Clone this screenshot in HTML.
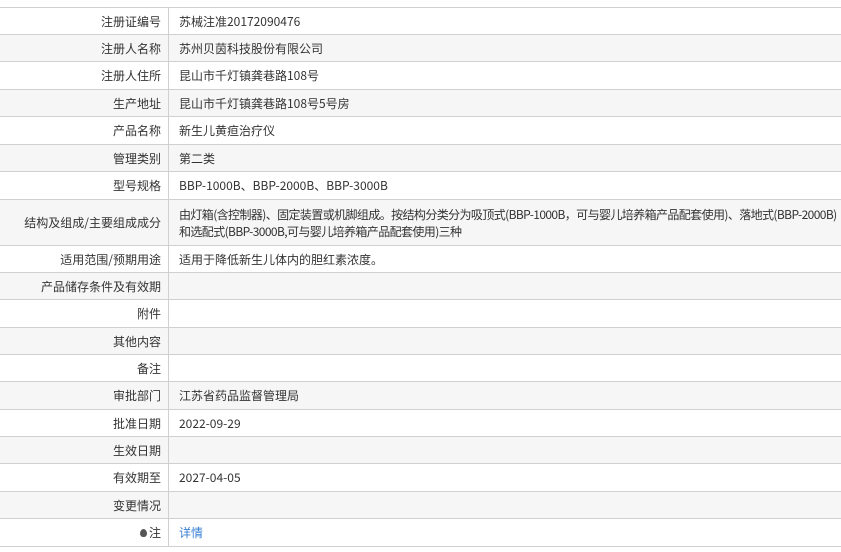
<!DOCTYPE html>
<html><head><meta charset="utf-8"><style>
body{margin:0;width:841px;height:552px;background:#fff;font-family:"Noto Sans CJK SC","Liberation Sans",sans-serif;font-size:12px;color:#333;position:relative;overflow:hidden}
.r{position:absolute;left:0;width:841px;border-top:1px solid #d0d0d0;box-sizing:border-box}
.g{background:#f6f6f6}
.l{position:absolute;left:0;width:169px;top:0;bottom:0;border-right:1px solid #d0d0d0;text-align:right;padding-right:7px;box-sizing:border-box;display:flex;align-items:center;justify-content:flex-end;white-space:nowrap}
.v{position:absolute;left:179px;right:0;top:0;bottom:0;display:flex;align-items:center;line-height:17px;white-space:nowrap}
.end{position:absolute;left:0;width:841px;top:546px;border-top:1px solid #d0d0d0}
a{color:#3a7fd5;text-decoration:none}
</style></head><body>
<div class="r" style="top:7px;height:27px"><div class="l">注册证编号</div><div class="v">苏械注准20172090476</div></div>
<div class="r g" style="top:34px;height:27px"><div class="l">注册人名称</div><div class="v">苏州贝茵科技股份有限公司</div></div>
<div class="r" style="top:61px;height:28px"><div class="l">注册人住所</div><div class="v">昆山市千灯镇龚巷路108号</div></div>
<div class="r g" style="top:89px;height:27px"><div class="l">生产地址</div><div class="v">昆山市千灯镇龚巷路108号5号房</div></div>
<div class="r" style="top:116px;height:28px"><div class="l">产品名称</div><div class="v">新生儿黄疸治疗仪</div></div>
<div class="r g" style="top:144px;height:27px"><div class="l">管理类别</div><div class="v">第二类</div></div>
<div class="r" style="top:171px;height:28px"><div class="l">型号规格</div><div class="v">BBP-1000B、BBP-2000B、BBP-3000B</div></div>
<div class="r g" style="top:199px;height:46px"><div class="l">结构及组成/主要组成成分</div><div class="v"><div style="letter-spacing:-0.6px">由灯箱(含控制器)、固定装置或机脚组成。按结构分类分为吸顶式(BBP-1000B，可与婴儿培养箱产品配套使用)、落地式(BBP-2000B)<br>和选配式(BBP-3000B,可与婴儿培养箱产品配套使用)三种</div></div></div>
<div class="r" style="top:245px;height:27px"><div class="l">适用范围/预期用途</div><div class="v">适用于降低新生儿体内的胆红素浓度。</div></div>
<div class="r g" style="top:272px;height:27px"><div class="l">产品储存条件及有效期</div><div class="v"></div></div>
<div class="r" style="top:299px;height:28px"><div class="l">附件</div><div class="v"></div></div>
<div class="r g" style="top:327px;height:27px"><div class="l">其他内容</div><div class="v"></div></div>
<div class="r" style="top:354px;height:27px"><div class="l">备注</div><div class="v"></div></div>
<div class="r g" style="top:381px;height:28px"><div class="l">审批部门</div><div class="v">江苏省药品监督管理局</div></div>
<div class="r" style="top:409px;height:27px"><div class="l">批准日期</div><div class="v">2022-09-29</div></div>
<div class="r g" style="top:436px;height:27px"><div class="l">生效日期</div><div class="v"></div></div>
<div class="r" style="top:463px;height:28px"><div class="l">有效期至</div><div class="v">2027-04-05</div></div>
<div class="r g" style="top:491px;height:27px"><div class="l">变更情况</div><div class="v"></div></div>
<div class="r" style="top:518px;height:28px"><div class="l"><span style="display:inline-block;width:7px;height:8px;background:#555;border-radius:50% 50% 50% 50%/60% 60% 40% 40%;margin-right:2px"></span>注</div><div class="v"><a>详情</a></div></div>
<div class="end"></div>
</body></html>
